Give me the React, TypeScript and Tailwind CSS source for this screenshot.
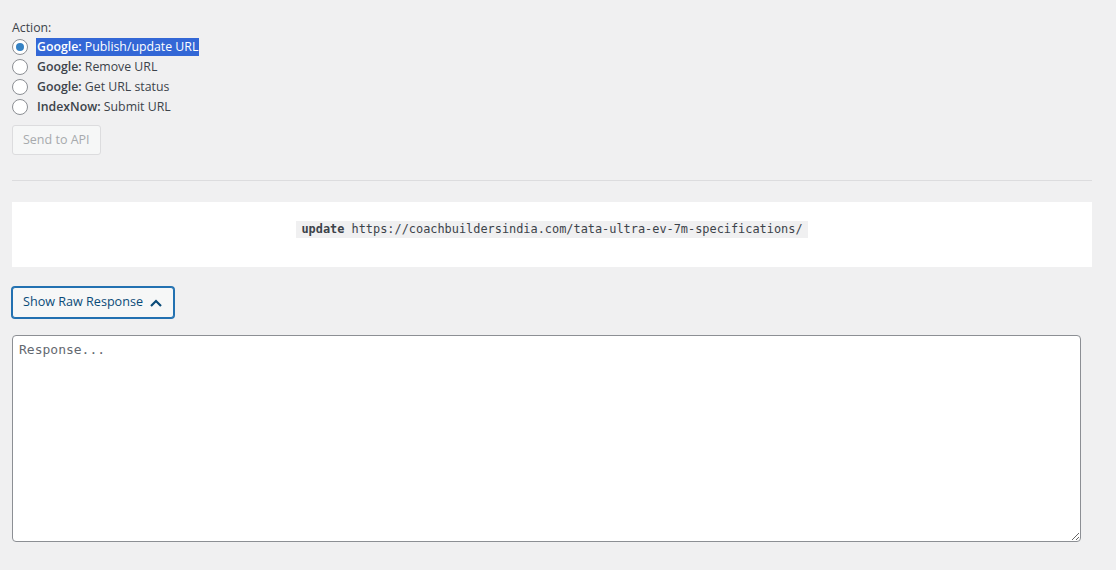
import React from "react";

const sans = "font-['Segoe_UI','Open_Sans','Noto_Sans',sans-serif]";
const mono = "font-['Consolas','DejaVu_Sans_Mono',monospace]";

function Radio({ checked }: { checked?: boolean }) {
  return (
    <span className="w-4 h-4 rounded-full border border-[#8c8f94] bg-white flex items-center justify-center shrink-0">
      {checked && <span className="w-2 h-2 rounded-full bg-[#3582c4]" />}
    </span>
  );
}

export default function App() {
  const opts = [
    { b: "Google:", t: "Publish/update URL", sel: true },
    { b: "Google:", t: "Remove URL" },
    { b: "Google:", t: "Get URL status" },
    { b: "IndexNow:", t: "Submit URL" },
  ];
  return (
    <div className={`min-h-[570px] w-[1116px] bg-[#f0f0f1] text-[#3c434a] text-[12.3px] ${sans} pl-3 pr-6 pt-[19px]`}>
      <div className="leading-[18px]">Action:</div>
      <div className="flex flex-col">
        {opts.map((o, i) => (
          <div key={i} className="flex items-center h-5 gap-2">
            <Radio checked={o.sel} />
            <span className={`leading-[18px] px-[1px] ${o.sel ? "bg-[#3367d6] text-white" : ""}`}>
              <b className="font-semibold">{o.b}</b> {o.t}
            </span>
          </div>
        ))}
      </div>
      <button className="mt-[8px] h-[30px] px-[10px] border border-[#dcdcde] bg-[#f6f7f7] text-[#a7aaad] rounded-[3px] text-[12.5px]">
        Send to API
      </button>
      <div className="mt-[25px] h-px bg-[#dcdcde] w-[1080px]" />
      <div className="mt-[21px] w-[1080px] h-[65px] bg-white flex items-start justify-center pt-[19px]">
        <code className={`${mono} text-[11.9px] bg-[#f0f0f1] text-[#3c434a] px-[5px] py-[1px] leading-[15px]`}>
          <b>update</b> https://coachbuildersindia.com/tata-ultra-ev-7m-specifications/
        </code>
      </div>
      <button className="mt-[20px] h-[31px] px-[10px] border border-[#2271b1] shadow-[0_0_0_1px_#2271b1] bg-[#f6f7f7] text-[#0a4b78] rounded-[3px] text-[12.6px] flex items-center gap-[6px]">
        Show Raw Response
        <svg width="14" height="10" viewBox="0 0 14 10">
          <path d="M2 8 L7 3 L12 8" fill="none" stroke="#0a4b78" strokeWidth="2.2" />
        </svg>
      </button>
      <textarea
        placeholder="Response..."
        className={`mt-[17px] block w-[1069px] h-[207px] bg-white border border-[#8c8f94] rounded-[4px] px-[6px] py-[4px] ${mono} text-[13px] placeholder:text-[#646970] outline-none`}
      />
    </div>
  );
}
